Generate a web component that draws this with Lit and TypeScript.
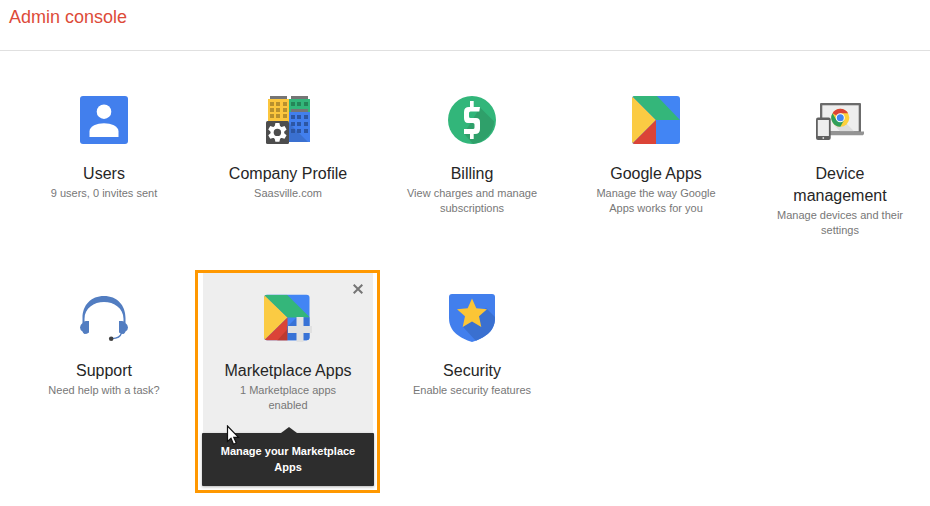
import { LitElement, html, svg, css, nothing } from "lit";
import type { SVGTemplateResult } from "lit";
import { customElement, property } from "lit/decorators.js";

const windows = (xs: number[], ys: number[], fill: string) =>
  ys.map((y) => xs.map((x) => svg`<rect x=${x} y=${y} width="4" height="4" fill=${fill}/>`));

const icons: Record<string, SVGTemplateResult> = {
  users: svg`
    <rect width="48" height="48" rx="3" fill="#427fed"/>
    <circle cx="24" cy="15.7" r="7.3" fill="#fff"/>
    <path d="M9.5 41V35.5C9.5 30 17 27.2 24 27.2S38.5 30 38.5 35.5V41Z" fill="#fff"/>`,
  company: svg`
    <path d="M6 0H23V3H6ZM27 0H44V3H27Z" fill="#757575"/>
    <rect x="4" y="3" width="21" height="23" fill="#fcc63d"/>
    <rect x="25" y="3" width="21" height="13" fill="#32b67a"/>
    <rect x="25" y="16" width="21" height="30" fill="#427fed"/>
    <rect x="27" y="13" width="17" height="3" fill="#757575"/>
    <path d="M25 27L44 46H25Z" fill="#3a70d0"/>
    ${windows([6, 12, 19], [6, 12, 18], "#b8902e")}
    ${windows([27, 33, 40], [6], "#258558")}
    ${windows([27, 33, 40], [19, 26, 33], "#2c56a3")}
    <rect x="2" y="25" width="23" height="23" rx="1.5" fill="#4d4d4d"/>
    <g fill="#fff" transform="translate(13.4 36.4)">
      ${[0, 60, 120].map((a) => svg`<path d="M-2 -9.4H2L3.2 -4V4L2 9.4H-2L-3.2 4V-4Z" transform="rotate(${a})"/>`)}
      <circle r="6.8"/>
    </g>
    <circle cx="13.4" cy="36.4" r="3.7" fill="#4d4d4d"/>`,
  billing: svg`
    <circle cx="24" cy="24" r="24" fill="#32b67a"/>
    <path d="M32 11.5L46.2 25.5A24 24 0 0 1 25 48L16 37.5Z" fill="#2fa06a"/>
    <path d="M22 5H25.700V11H32L31.300 15.500H22.500Q21 15.500 21 17V20.500Q21 22 22.500 22H28Q32 22 32 26V33Q32 38 27 38H25.700V43H22V38H16V33H25Q26.500 33 26.500 31.500V28.500Q26.500 27 25 27H20Q16 27 16 22V16Q16 11 21 11H22Z" fill="#fff"/>`,
  apps: svg`
    <clipPath id="tile"><rect width="48" height="48" rx="3"/></clipPath>
    <g clip-path="url(#tile)">
      <rect width="48" height="48" fill="#4285f4"/>
      <path d="M0 0L24 24L0 48Z" fill="#fbcb43"/>
      <path d="M0 0H25L48 24H24Z" fill="#34b67a"/>
      <path d="M24 24V48H0Z" fill="#db4437"/>
    </g>`,
  devices: svg`
    <rect x="4" y="7" width="41" height="30" rx="1" fill="#6b6b6b"/>
    <rect x="6.300" y="9.300" width="36.400" height="26" fill="#eee"/>
    <path d="M31 28L38 35.300H24L18 29Z" fill="#ddd"/>
    <path d="M12 35.500H48V38L47 39.200H12Z" fill="#949494"/>
    <circle cx="24.300" cy="21.800" r="9" fill="#fdd13d"/>
    <path d="M24.300 21.800L16.500 17.300A9 9 0 0 1 32.100 17.300H24.300Z" fill="#db4437"/>
    <path d="M16.500 17.300A9 9 0 0 0 24.300 30.800L28.200 24L24.300 21.800L20.400 24Z" fill="#2f9e5b"/>
    <circle cx="24.300" cy="21.800" r="4.500" fill="#fff"/>
    <circle cx="24.300" cy="21.800" r="3.500" fill="#4285f4"/>
    <rect x="0" y="21.500" width="14.700" height="22.500" rx="2" fill="#616161"/>
    <rect x="1.800" y="24" width="11.100" height="16" fill="#eee"/>
    <circle cx="7.300" cy="42" r="0.900" fill="#ddd"/>`,
  support: svg`
    <g transform="translate(0 1)">
      <path d="M2.500 29V24C2.500 11 11 2 24 2S45.500 11 45.500 24V29H43.500V25C43.500 14 34 8 24 8S4.500 14 4.500 25V29Z" fill="#527dc1"/>
      <path d="M9 27V38.500Q7 40 4.500 40Q3 39 2.500 37.500Q0 36 0 33.500T2.500 29Q4 27 6 27ZM39 27V38.500Q41 40 43.500 40Q45 39 45.500 37.500Q48 36 48 33.500T45.500 29Q44 27 42 27Z" fill="#527dc1"/>
      <path d="M41.500 39Q40 44.300 32 44.600" fill="none" stroke="#527dc1" stroke-width="1.300"/>
      <circle cx="31.200" cy="44.700" r="2.300" fill="#424242"/>
    </g>`,
  marketplace: svg`
    <clipPath id="tile"><rect y="0.700" width="45.500" height="45.500" rx="3"/></clipPath>
    <g transform="translate(0 1)">
      <g clip-path="url(#tile)">
        <rect width="48" height="48" fill="#4285f4"/>
        <path d="M0 0.700L23.500 23.500L0 46.500Z" fill="#fbcb43"/>
        <path d="M0 0.700H23L46 23.500H23.500Z" fill="#34b67a"/>
        <path d="M23.500 23.500V48H0V46.500Z" fill="#db4437"/>
        <path d="M23.500 35V48H12Z" fill="#bd3a2f"/>
        <path d="M32.500 23.500H46V48H23.500V32.500Z" fill="#3872d6"/>
      </g>
      <path d="M32.500 23H39.500V32H48V39H39.500V48H32.500V39H24V32H32.500Z" fill="#e1e1e1"/>
    </g>`,
  security: svg`
    <clipPath id="shield"><path d="M4 0H44Q47 0 47 3V24C47 38 36 44 24 48C12 44 1 38 1 24V3Q1 0 4 0Z"/></clipPath>
    <g transform="translate(0 1)">
      <g clip-path="url(#shield)">
        <rect width="48" height="48" fill="#427fed"/>
        <path d="M38 14L48 24V48H29L15 33Z" fill="#3a70d0"/>
      </g>
      <path d="M24 4.500L28.300 14.200L39 15.200L31 22.300L33.300 33L24 27.500L14.700 33L17 22.300L9 15.200L19.700 14.200Z" fill="#fbc536"/>
    </g>`,
};

interface Item {
  icon: string;
  name: string;
  detail: string;
  tip?: string;
}

const items: Item[] = [
  { icon: "users", name: "Users", detail: "9 users, 0 invites sent" },
  { icon: "company", name: "Company Profile", detail: "Saasville.com" },
  { icon: "billing", name: "Billing", detail: "View charges and manage subscriptions" },
  { icon: "apps", name: "Google Apps", detail: "Manage the way Google Apps works for you" },
  { icon: "devices", name: "Device management", detail: "Manage devices and their settings" },
  { icon: "support", name: "Support", detail: "Need help with a task?" },
  {
    icon: "marketplace",
    name: "Marketplace Apps",
    detail: "1 Marketplace apps enabled",
    tip: "Manage your Marketplace Apps",
  },
  { icon: "security", name: "Security", detail: "Enable security features" },
];

@customElement("console-card")
export class ConsoleCard extends LitElement {
  @property({ attribute: false }) item!: Item;

  static styles = css`
    :host {
      display: block;
      position: relative;
    }
    .card {
      display: flex;
      flex-direction: column;
      align-items: center;
      padding: 20px 19px;
      color: #262626;
      text-align: center;
      text-decoration: none;
    }
    .card.active {
      background: #eee;
    }
    .icon {
      width: 48px;
      height: 48px;
      margin-bottom: 19px;
      overflow: visible;
    }
    .name {
      margin: 0;
      font-size: 16px;
      font-weight: 400;
      line-height: 22px;
    }
    .detail {
      margin: 1px 0 0;
      color: #777;
      font-size: 11px;
      line-height: 15px;
    }
    .close {
      position: absolute;
      top: 11px;
      right: 10px;
      width: 10px;
      height: 10px;
      padding: 0;
      border: 0;
      background: none;
    }
    .cross {
      display: block;
      width: 10px;
      height: 10px;
      fill: none;
      stroke: #757575;
      stroke-width: 2;
    }
    .tip {
      position: absolute;
      top: 160px;
      left: -1px;
      right: -1px;
      padding: 10px 16px 11px;
      border-radius: 1px;
      background: #2d2d2d;
      box-shadow: 0 1px 3px rgba(0, 0, 0, 0.3);
      color: #fff;
      font-size: 11px;
      font-weight: 700;
      line-height: 16px;
      text-align: center;
    }
    .tip::before {
      content: "";
      position: absolute;
      bottom: 100%;
      left: 50%;
      margin-left: -7px;
      border: solid transparent;
      border-width: 0 8px 6px;
      border-bottom-color: #2d2d2d;
    }
    .frame {
      position: absolute;
      inset: -3px -7px -60px -8px;
      border: 3px solid #ff9800;
      pointer-events: none;
    }
    .pointer {
      position: absolute;
      top: 152px;
      left: 23px;
      width: 14px;
      height: 21px;
      pointer-events: none;
    }
  `;

  render() {
    const { icon, name, detail, tip } = this.item;
    return html`
      <a class="card ${tip ? "active" : ""}" href="#${icon}">
        <svg class="icon" viewBox="0 0 48 48" aria-hidden="true">${icons[icon]}</svg>
        <h2 class="name">${name}</h2>
        <p class="detail">${detail}</p>
      </a>
      ${tip
        ? html`
            <button class="close" type="button" aria-label="Remove ${name}">
              <svg class="cross" viewBox="0 0 10 10"><path d="M0.700 0.700L9.300 9.300M9.300 0.700L0.700 9.300"/></svg>
            </button>
            <div class="tip" role="tooltip">${tip}</div>
            <div class="frame"></div>
            <svg class="pointer" viewBox="0 0 14 21" aria-hidden="true">
              <path d="M1.500 1V16.500L5 13.300L7.500 19.200L10.300 18L7.800 12.300H12.500Z" fill="#fff" stroke="#111" stroke-width="1.200"/>
            </svg>
          `
        : nothing}
    `;
  }
}

@customElement("app-root")
export class AppRoot extends LitElement {
  static styles = css`
    :host {
      display: block;
      font-family: "Liberation Sans", Arial, sans-serif;
    }
    .header {
      padding: 6px 9px 22px;
      border-bottom: 1px solid #e0e0e0;
    }
    .heading {
      margin: 0;
      color: #dd4b39;
      font-size: 18px;
      font-weight: 400;
      line-height: 22px;
    }
    .grid {
      display: grid;
      grid-template-columns: repeat(auto-fill, 170px);
      align-items: start;
      gap: 15px 14px;
      padding: 25px 5px 72px 19px;
    }
  `;

  render() {
    return html`
      <header class="header"><h1 class="heading">Admin console</h1></header>
      <main class="grid">
        ${items.map((item) => html`<console-card .item=${item}></console-card>`)}
      </main>
    `;
  }
}
